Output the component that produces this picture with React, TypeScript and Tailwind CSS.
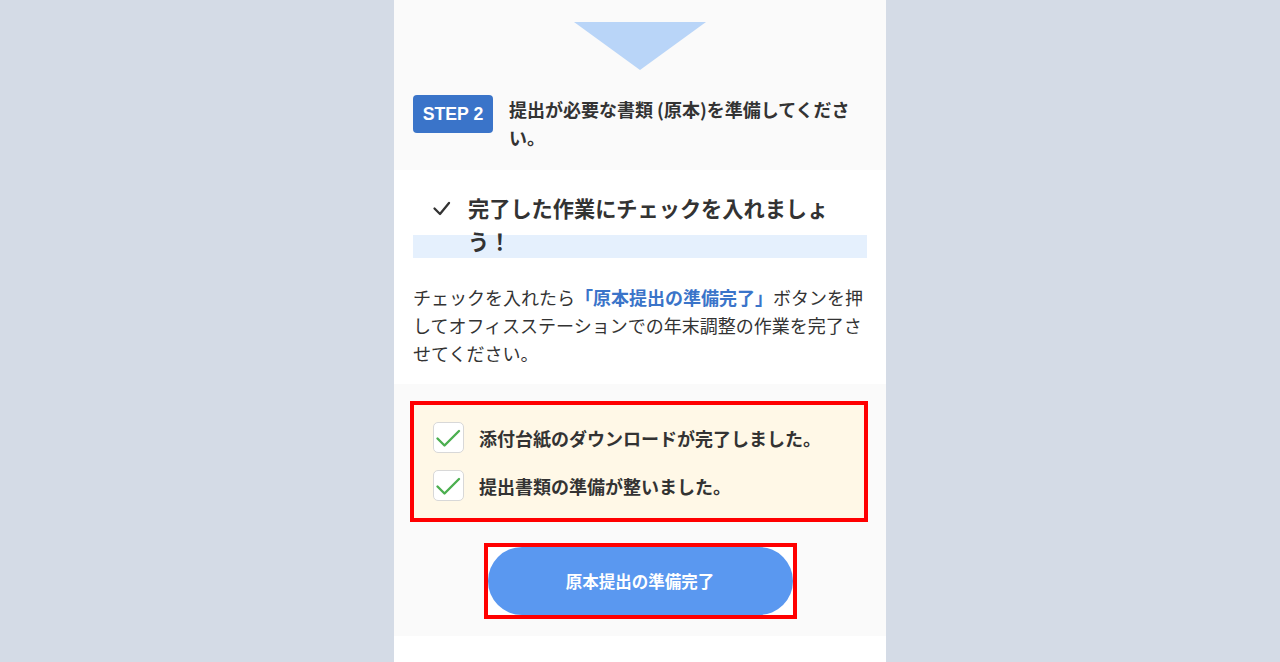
import React from "react";

const jp = { fontFamily: '"Noto Sans CJK JP", "Noto Sans", sans-serif' };

function CheckBox() {
  return (
    <div className="w-[31px] h-[31px] shrink-0 rounded-[5px] border border-[#d8d8d8] bg-white">
      <svg width="29" height="29" viewBox="0 0 29 29" fill="none">
        <polyline points="3.5,15.5 10.5,22.5 25,8" stroke="#4caf50" strokeWidth="2.4" strokeLinecap="round" strokeLinejoin="round" />
      </svg>
    </div>
  );
}

export default function App() {
  return (
    <div className="min-h-screen w-full bg-[#d4dbe6] flex justify-center" style={jp}>
      <div className="w-[492px] min-h-screen bg-white flex flex-col text-[#333333]">
        {/* Section 1 */}
        <div className="bg-[#fafafa] pt-[22px] pb-[19px]">
          <div className="mx-auto w-0 h-0 border-l-[66px] border-r-[66px] border-t-[48px] border-l-transparent border-r-transparent border-t-[#b9d5f8]" />
          <div className="mt-[25px] flex items-start pl-[19px] pr-[25px]">
            <div
              className="w-[80px] h-[38px] shrink-0 rounded-[4px] bg-[#3a74c9] text-white font-bold text-[17.7px] flex items-center justify-center"
              style={{ fontFamily: '"Liberation Sans", Arial, sans-serif' }}
            >
              STEP 2
            </div>
            <div className="ml-[16px] flex-1 text-[18px] leading-[28px] font-bold">
              提出が必要な書類 (原本)を準備してください。
            </div>
          </div>
        </div>

        {/* Section 2 */}
        <div className="bg-white pt-[22px] pb-[17px]">
          <div className="mx-[19px] flex items-start pl-[19px] pr-[30px] pb-[1px] bg-[linear-gradient(transparent_65%,#e5f0fd_65%)]">
            <div className="w-[19px] h-[32px] shrink-0 flex items-center">
              <svg width="19" height="15" viewBox="0 0 19 15" fill="none">
                <polyline points="2.5,7.5 8,13 17,2" stroke="#333333" strokeWidth="2.3" strokeLinecap="round" strokeLinejoin="round" />
              </svg>
            </div>
            <div className="ml-[17px] flex-1 text-[21.2px] leading-[33px] font-bold -mt-[1px]">
              完了した作業にチェックを入れましょう！
            </div>
          </div>
          <p className="mx-[19px] mt-[25px] text-[18px] leading-[28px]">
            チェックを入れたら<span className="font-bold text-[#3a74c9]">「原本提出の準備完了」</span>ボタンを押してオフィスステーションでの年末調整の作業を完了させてください。
          </p>
        </div>

        {/* Section 3 */}
        <div className="bg-[#fafafa] pt-[17px] pb-[17px]">
          <div className="ml-[16px] w-[458px] border-4 border-[#ff0000] bg-[#fff8e7] pt-[17px] pb-[17px] pl-[19px] flex flex-col gap-[17px]">
            <div className="flex items-center">
              <CheckBox />
              <span className="ml-[15px] text-[18px] font-bold leading-[30px]">添付台紙のダウンロードが完了しました。</span>
            </div>
            <div className="flex items-center">
              <CheckBox />
              <span className="ml-[15px] text-[18px] font-bold leading-[30px]">提出書類の準備が整いました。</span>
            </div>
          </div>
          <div className="mx-auto mt-[21px] w-[313px] h-[76px] border-4 border-[#ff0000] bg-white">
            <button className="w-full h-full rounded-full bg-[#5a98f0] text-white font-bold text-[16.5px] flex items-center justify-center" style={jp}>
              原本提出の準備完了
            </button>
          </div>
        </div>
        <div className="flex-1 bg-white" />
      </div>
    </div>
  );
}
